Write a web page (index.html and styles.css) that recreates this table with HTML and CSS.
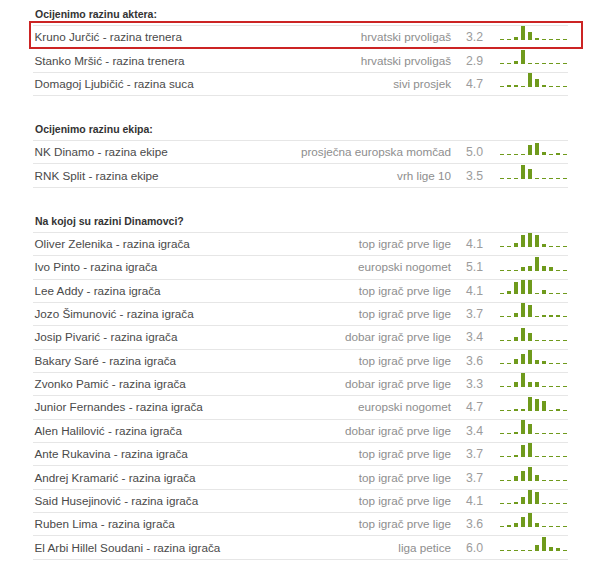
FILE: index.html
```html
<!DOCTYPE html>
<html lang="hr">
<head>
<meta charset="utf-8">
<title>Ocjene</title>
<link rel="stylesheet" href="styles.css">
</head>
<body>
<div class="page">
  <section class="block">
    <h2 class="block-title">Ocijenimo razinu aktera:</h2>
    <ul class="list">
      <li class="row highlighted">
        <span class="name">Kruno Jurčić - razina trenera</span>
        <span class="cat">hrvatski prvoligaš</span>
        <span class="score">3.2</span>
        <span class="chart"><i style="height:1px"></i><i style="height:1px"></i><i style="height:3px"></i><i style="height:14px"></i><i style="height:8px"></i><i style="height:2px"></i><i style="height:1px"></i><i style="height:1px"></i><i style="height:1px"></i><i style="height:1px"></i></span>
      </li>
      <li class="row">
        <span class="name">Stanko Mršić - razina trenera</span>
        <span class="cat">hrvatski prvoligaš</span>
        <span class="score">2.9</span>
        <span class="chart"><i style="height:1px"></i><i style="height:1px"></i><i style="height:3px"></i><i style="height:14px"></i><i style="height:1px"></i><i style="height:1px"></i><i style="height:1px"></i><i style="height:1px"></i><i style="height:1px"></i><i style="height:1px"></i></span>
      </li>
      <li class="row">
        <span class="name">Domagoj Ljubičić - razina suca</span>
        <span class="cat">sivi prosjek</span>
        <span class="score">4.7</span>
        <span class="chart"><i style="height:1px"></i><i style="height:2px"></i><i style="height:2px"></i><i style="height:1px"></i><i style="height:14px"></i><i style="height:8px"></i><i style="height:2px"></i><i style="height:1px"></i><i style="height:1px"></i><i style="height:1px"></i></span>
      </li>
    </ul>
  </section>

  <section class="block">
    <h2 class="block-title">Ocijenimo razinu ekipa:</h2>
    <ul class="list">
      <li class="row">
        <span class="name">NK Dinamo - razina ekipe</span>
        <span class="cat">prosječna europska momčad</span>
        <span class="score">5.0</span>
        <span class="chart"><i style="height:1px"></i><i style="height:1px"></i><i style="height:1px"></i><i style="height:1px"></i><i style="height:10px"></i><i style="height:12px"></i><i style="height:3px"></i><i style="height:1px"></i><i style="height:2px"></i><i style="height:1px"></i></span>
      </li>
      <li class="row">
        <span class="name">RNK Split - razina ekipe</span>
        <span class="cat">vrh lige 10</span>
        <span class="score">3.5</span>
        <span class="chart"><i style="height:1px"></i><i style="height:1px"></i><i style="height:1px"></i><i style="height:14px"></i><i style="height:10px"></i><i style="height:1px"></i><i style="height:1px"></i><i style="height:1px"></i><i style="height:1px"></i><i style="height:1px"></i></span>
      </li>
    </ul>
  </section>

  <section class="block">
    <h2 class="block-title">Na kojoj su razini Dinamovci?</h2>
    <ul class="list">
      <li class="row">
        <span class="name">Oliver Zelenika - razina igrača</span>
        <span class="cat">top igrač prve lige</span>
        <span class="score">4.1</span>
        <span class="chart"><i style="height:1px"></i><i style="height:1px"></i><i style="height:4px"></i><i style="height:12px"></i><i style="height:14px"></i><i style="height:12px"></i><i style="height:3px"></i><i style="height:1px"></i><i style="height:1px"></i><i style="height:1px"></i></span>
      </li>
      <li class="row">
        <span class="name">Ivo Pinto - razina igrača</span>
        <span class="cat">europski nogomet</span>
        <span class="score">5.1</span>
        <span class="chart"><i style="height:1px"></i><i style="height:1px"></i><i style="height:1px"></i><i style="height:4px"></i><i style="height:5px"></i><i style="height:14px"></i><i style="height:5px"></i><i style="height:4px"></i><i style="height:1px"></i><i style="height:1px"></i></span>
      </li>
      <li class="row">
        <span class="name">Lee Addy - razina igrača</span>
        <span class="cat">top igrač prve lige</span>
        <span class="score">4.1</span>
        <span class="chart"><i style="height:1px"></i><i style="height:3px"></i><i style="height:12px"></i><i style="height:14px"></i><i style="height:14px"></i><i style="height:1px"></i><i style="height:4px"></i><i style="height:1px"></i><i style="height:1px"></i><i style="height:1px"></i></span>
      </li>
      <li class="row">
        <span class="name">Jozo Šimunović - razina igrača</span>
        <span class="cat">top igrač prve lige</span>
        <span class="score">3.7</span>
        <span class="chart"><i style="height:1px"></i><i style="height:1px"></i><i style="height:4px"></i><i style="height:14px"></i><i style="height:12px"></i><i style="height:1px"></i><i style="height:2px"></i><i style="height:2px"></i><i style="height:2px"></i><i style="height:1px"></i></span>
      </li>
      <li class="row">
        <span class="name">Josip Pivarić - razina igrača</span>
        <span class="cat">dobar igrač prve lige</span>
        <span class="score">3.4</span>
        <span class="chart"><i style="height:1px"></i><i style="height:1px"></i><i style="height:4px"></i><i style="height:13px"></i><i style="height:8px"></i><i style="height:1px"></i><i style="height:1px"></i><i style="height:1px"></i><i style="height:1px"></i><i style="height:1px"></i></span>
      </li>
      <li class="row">
        <span class="name">Bakary Saré - razina igrača</span>
        <span class="cat">top igrač prve lige</span>
        <span class="score">3.6</span>
        <span class="chart"><i style="height:1px"></i><i style="height:1px"></i><i style="height:5px"></i><i style="height:10px"></i><i style="height:14px"></i><i style="height:4px"></i><i style="height:3px"></i><i style="height:1px"></i><i style="height:1px"></i><i style="height:1px"></i></span>
      </li>
      <li class="row">
        <span class="name">Zvonko Pamić - razina igrača</span>
        <span class="cat">dobar igrač prve lige</span>
        <span class="score">3.3</span>
        <span class="chart"><i style="height:1px"></i><i style="height:1px"></i><i style="height:5px"></i><i style="height:14px"></i><i style="height:5px"></i><i style="height:5px"></i><i style="height:1px"></i><i style="height:1px"></i><i style="height:1px"></i><i style="height:1px"></i></span>
      </li>
      <li class="row">
        <span class="name">Junior Fernandes - razina igrača</span>
        <span class="cat">europski nogomet</span>
        <span class="score">4.7</span>
        <span class="chart"><i style="height:1px"></i><i style="height:1px"></i><i style="height:2px"></i><i style="height:2px"></i><i style="height:14px"></i><i style="height:12px"></i><i style="height:10px"></i><i style="height:1px"></i><i style="height:2px"></i><i style="height:1px"></i></span>
      </li>
      <li class="row">
        <span class="name">Alen Halilović - razina igrača</span>
        <span class="cat">dobar igrač prve lige</span>
        <span class="score">3.4</span>
        <span class="chart"><i style="height:1px"></i><i style="height:1px"></i><i style="height:2px"></i><i style="height:14px"></i><i style="height:10px"></i><i style="height:1px"></i><i style="height:1px"></i><i style="height:1px"></i><i style="height:1px"></i><i style="height:1px"></i></span>
      </li>
      <li class="row">
        <span class="name">Ante Rukavina - razina igrača</span>
        <span class="cat">top igrač prve lige</span>
        <span class="score">3.7</span>
        <span class="chart"><i style="height:1px"></i><i style="height:1px"></i><i style="height:2px"></i><i style="height:12px"></i><i style="height:14px"></i><i style="height:1px"></i><i style="height:1px"></i><i style="height:1px"></i><i style="height:1px"></i><i style="height:1px"></i></span>
      </li>
      <li class="row">
        <span class="name">Andrej Kramarić - razina igrača</span>
        <span class="cat">top igrač prve lige</span>
        <span class="score">3.7</span>
        <span class="chart"><i style="height:1px"></i><i style="height:1px"></i><i style="height:5px"></i><i style="height:10px"></i><i style="height:14px"></i><i style="height:6px"></i><i style="height:1px"></i><i style="height:1px"></i><i style="height:1px"></i><i style="height:1px"></i></span>
      </li>
      <li class="row">
        <span class="name">Said Husejinović - razina igrača</span>
        <span class="cat">top igrač prve lige</span>
        <span class="score">4.1</span>
        <span class="chart"><i style="height:1px"></i><i style="height:1px"></i><i style="height:2px"></i><i style="height:7px"></i><i style="height:14px"></i><i style="height:12px"></i><i style="height:1px"></i><i style="height:1px"></i><i style="height:1px"></i><i style="height:1px"></i></span>
      </li>
      <li class="row">
        <span class="name">Ruben Lima - razina igrača</span>
        <span class="cat">top igrač prve lige</span>
        <span class="score">3.6</span>
        <span class="chart"><i style="height:1px"></i><i style="height:2px"></i><i style="height:4px"></i><i style="height:10px"></i><i style="height:14px"></i><i style="height:4px"></i><i style="height:1px"></i><i style="height:1px"></i><i style="height:1px"></i><i style="height:1px"></i></span>
      </li>
      <li class="row">
        <span class="name">El Arbi Hillel Soudani - razina igrača</span>
        <span class="cat">liga petice</span>
        <span class="score">6.0</span>
        <span class="chart"><i style="height:1px"></i><i style="height:1px"></i><i style="height:1px"></i><i style="height:1px"></i><i style="height:1px"></i><i style="height:6px"></i><i style="height:14px"></i><i style="height:4px"></i><i style="height:3px"></i><i style="height:1px"></i></span>
      </li>
    </ul>
  </section>
</div>
</body>
</html>
```

FILE: styles.css
```css
html, body {
  margin: 0;
  padding: 0;
  background: #ffffff;
}

body {
  font-family: "Liberation Sans", Arial, sans-serif;
  color: #444;
}

.page {
  margin-left: 33px;
  width: 535px;
  padding-top: 3px;
}

.block + .block {
  margin-top: 22px;
}

.block-title {
  margin: 0;
  height: 22px;
  line-height: 22px;
  padding-left: 2px;
  font-size: 10.5px;
  font-weight: bold;
  color: #333;
}

.list {
  list-style: none;
  margin: 0;
  padding: 0;
  border-top: 1px solid #e6e6e6;
}

.row {
  position: relative;
  display: flex;
  align-items: center;
  box-sizing: border-box;
  height: 23.36px;
  border-bottom: 1px solid #e6e6e6;
  padding-left: 1.5px;
  font-size: 11.7px;
  line-height: 22px;
}

.name {
  flex: 1;
  color: #4a4a4a;
  white-space: nowrap;
}

.cat {
  color: #8e8e8e;
  text-align: right;
  white-space: nowrap;
}

.score {
  width: 49px;
  padding-left: 15px;
  box-sizing: border-box;
  color: #9c9c9c;
  font-size: 12.3px;
}

.chart {
  display: flex;
  align-items: flex-end;
  gap: 3px;
  height: 14px;
  width: 67px;
  margin-right: 1px;
  align-self: flex-end;
  margin-bottom: 8px;
}

.chart i {
  display: block;
  width: 4px;
  background: #6f9a1c;
}

.highlighted::after {
  content: "";
  position: absolute;
  left: -4px;
  right: -15px;
  top: -5px;
  bottom: -1px;
  border: 2.5px solid #cc2424;
  pointer-events: none;
}
```
